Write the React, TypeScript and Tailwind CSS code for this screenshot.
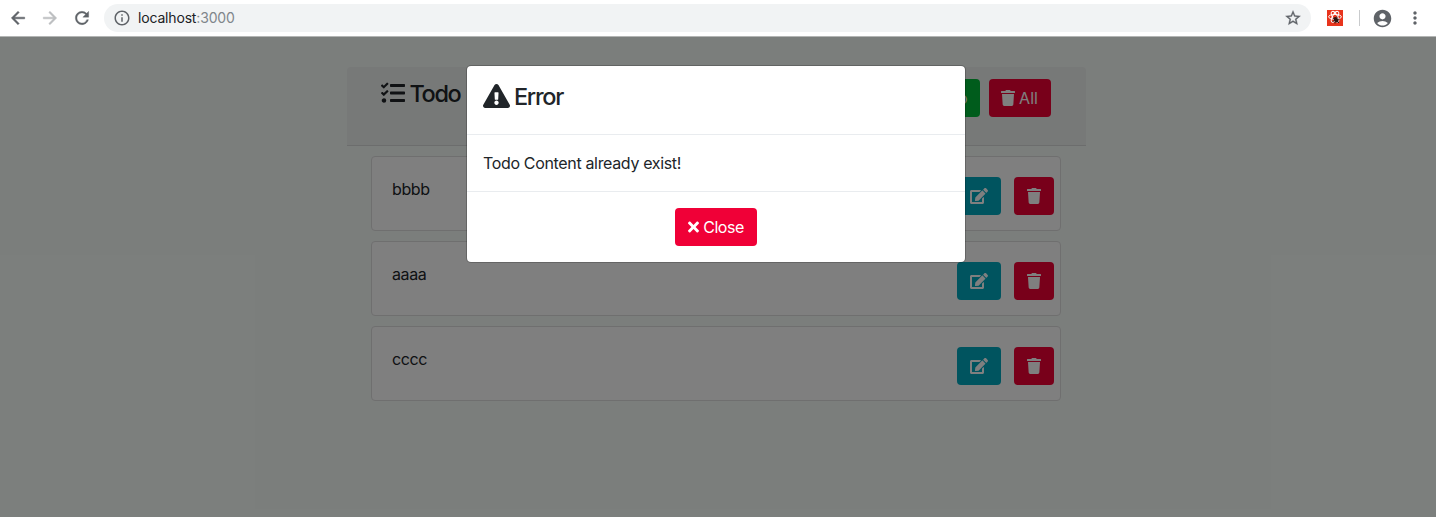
import React from 'react';
import { FaTasks, FaExclamationTriangle, FaTrash, FaEdit, FaTimes, FaPlus } from 'react-icons/fa';
import { MdArrowBack, MdArrowForward, MdRefresh, MdInfoOutline, MdStarBorder, MdAccountCircle, MdMoreVert } from 'react-icons/md';

const todos = ['bbbb', 'aaaa', 'cccc'];

function ExtensionIcon() {
  return (
    <svg viewBox="0 0 16 16" className="h-4 w-4" fill="none">
      <rect width="16" height="16" fill="#e8341c" />
      <g stroke="#fff" strokeWidth="1">
        <ellipse cx="8" cy="6.8" rx="6.4" ry="2.4" />
        <ellipse cx="8" cy="6.8" rx="6" ry="2.4" transform="rotate(60 8 6.8)" />
        <ellipse cx="8" cy="6.8" rx="6" ry="2.4" transform="rotate(120 8 6.8)" />
      </g>
      <ellipse cx="9" cy="9.8" rx="2" ry="3" fill="#2b1512" transform="rotate(-35 9 9.8)" />
      <path d="M6 8l2 1M10 6.5v2M12.5 9l-2 .5M5.5 11.5l2-1M12 13l-1.5-1.5M8 13.5v-2" stroke="#2b1512" />
    </svg>
  );
}

function BrowserBar() {
  return (
    <header className="flex h-[37px] items-center border-b border-[#b3b5b4] bg-white pl-2 pr-3 text-[#5f6368]">
      <MdArrowBack className="h-5 w-5 stroke-current [stroke-width:0.6] [&>path:first-child]:stroke-none" />
      <MdArrowForward className="ml-3 h-5 w-5 stroke-current text-[#bcbec0] [stroke-width:0.6] [&>path:first-child]:stroke-none" />
      <MdRefresh className="ml-3 h-5 w-5 stroke-current [stroke-width:0.4] [&>path:first-child]:stroke-none" />
      <div className="ml-3 flex h-7 flex-1 items-center rounded-full bg-[#f1f3f4] pl-[9px] pr-[9px]">
        <MdInfoOutline className="h-[18px] w-[18px]" />
        <span className="-mt-px ml-[7px] text-[14px] tracking-[-0.17px] text-[#202124]">
          localhost<span className="text-[#80868b]">:3000</span>
        </span>
        <MdStarBorder className="ml-auto h-[18px] w-[18px] stroke-current [stroke-width:0.4] [&>path:first-child]:stroke-none" />
      </div>
      <div className="ml-4">
        <ExtensionIcon />
      </div>
      <div className="ml-4 h-4 w-px bg-[#c9cbcd]" />
      <MdAccountCircle className="ml-3 h-[21px] w-[21px]" />
      <MdMoreVert className="ml-3 -mr-px h-5 w-5" />
    </header>
  );
}

export default function App() {
  return (
    <div className="flex h-[517px] flex-col overflow-hidden bg-white font-['Inter','Liberation_Sans',sans-serif] text-base text-[#212529]">
      <BrowserBar />
      <div className="relative flex-1 bg-[#f7fdf9] pr-1">
        <main className="mx-auto w-[739px] pt-[30px]">
          <div className="flex h-[79px] items-start justify-between rounded-t-[4px] border-b border-[#d8dbda] bg-[#eef2f0] pl-[34px] pr-[35px] pt-3">
            <h1 className="flex items-center text-[23.5px] font-medium leading-[29px] tracking-[-1.4px]">
              <FaTasks className="mb-[2px] mr-[5px] h-6 w-6" />
              Todo
            </h1>
            <div className="flex gap-[9px]">
              <button className="flex h-[38px] items-center gap-1 rounded bg-[#00b838] px-3 text-white">
                <FaPlus />
                Todo
              </button>
              <button className="flex h-[38px] w-[62px] items-center justify-center gap-1 rounded bg-[#f00034] text-white">
                <FaTrash className="h-4 w-[14px]" />
                <span>All</span>
              </button>
            </div>
          </div>
          <ul className="mx-auto flex w-[690px] flex-col gap-[10px] pt-[10px]">
            {todos.map((todo) => (
              <li key={todo} className="flex h-[75px] items-start rounded border border-[#dedede] bg-white pl-5 pr-[6px] pt-5">
                <span className="leading-6 tracking-[-0.4px]">{todo}</span>
                <button className="ml-auto flex h-[38px] w-11 items-center justify-center rounded bg-[#00a8bf] text-white">
                  <FaEdit className="h-4 w-[18px]" />
                </button>
                <button className="ml-[13px] flex h-[38px] w-10 items-center justify-center rounded bg-[#f00034] text-white">
                  <FaTrash className="h-4 w-[14px]" />
                </button>
              </li>
            ))}
          </ul>
        </main>
        <div className="absolute inset-0 bg-black/50 pr-1 pt-7">
          <section role="dialog" className="mx-auto w-[500px] rounded-[5px] border border-black/20 bg-white bg-clip-padding">
            <div className="flex h-[69px] items-start border-b border-[#e9ecef] px-4 pt-4">
              <h2 className="flex items-center text-[23.5px] font-medium leading-[30px] tracking-[-1.3px]">
                <FaExclamationTriangle className="mb-[2px] mr-1 h-6 w-[27px]" />
                Error
              </h2>
            </div>
            <p className="h-[57px] border-b border-[#e9ecef] px-4 pt-4 leading-6 tracking-[-0.34px]">Todo Content already exist!</p>
            <div className="flex justify-center py-4">
              <button className="flex h-[38px] w-[82px] items-center justify-center gap-1 rounded bg-[#f00037] text-white">
                <FaTimes className="h-4 w-[11px]" />
                <span className="tracking-[-0.5px]">Close</span>
              </button>
            </div>
          </section>
        </div>
      </div>
    </div>
  );
}
